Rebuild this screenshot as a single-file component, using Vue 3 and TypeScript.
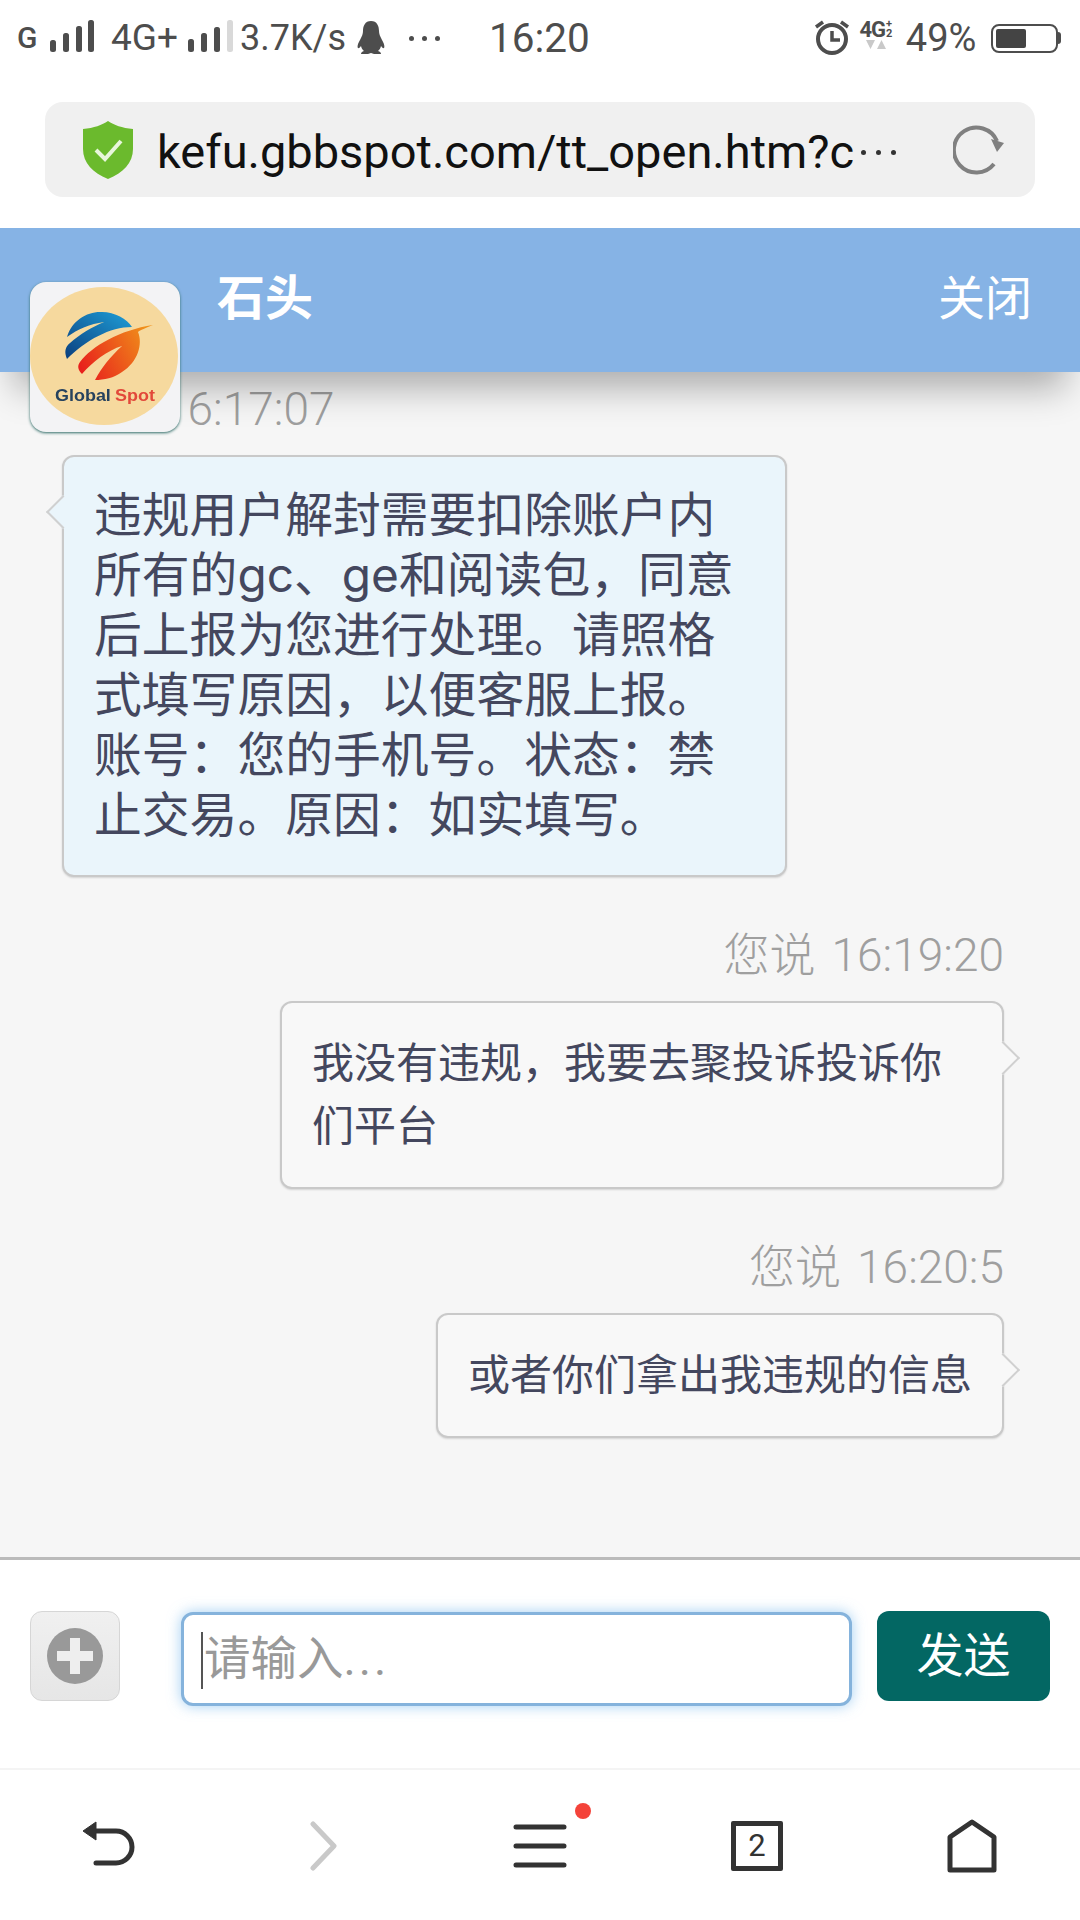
<template>
  <div class="page">
    <!-- 状态栏 -->
    <div class="status">
      <span class="st g">G</span>
      <svg class="bars b1" width="46" height="36" viewBox="0 0 46 36">
        <rect v-for="b in bars1" :key="b.x" :x="b.x" :y="b.y" width="6" :height="33 - b.y" rx="2.5" fill="#4d4d4d" />
      </svg>
      <span class="st net">4G+</span>
      <svg class="bars b2" width="48" height="36" viewBox="0 0 48 36">
        <rect v-for="b in bars2" :key="b.x" :x="b.x" :y="b.y" width="6" :height="33 - b.y" rx="2.5" :fill="b.c" />
      </svg>
      <span class="st speed">3.7K/s</span>
      <svg class="qq" width="28" height="36" viewBox="0 0 28 36">
        <path d="M14 1C8 1 6 6 6 11c0 3-1 5-3 9-2 3-3 7-2 8 1 .6 2-.6 3-2 .4 2 1 3 3 5-2 .6-3 1.500-3 3h7l3-1 3 1h7c0-1.500-1-2.400-3-3 2-2 2.600-3 3-5 1 1.400 2 2.600 3 2 1-1 0-5-2-8-2-4-3-6-3-9 0-5-2-10-8-10z" fill="#4d4d4d" />
      </svg>
      <span class="dots"><i></i><i></i><i></i></span>
      <span class="clock">16:20</span>
      <svg class="alarm" width="38" height="38" viewBox="0 0 38 38">
        <circle cx="19" cy="21" r="14" fill="none" stroke="#4d4d4d" stroke-width="4" />
        <path d="M19 13v9h8" fill="none" stroke="#4d4d4d" stroke-width="3.500" />
        <path d="M3 9l7-5M35 9l-7-5" fill="none" stroke="#4d4d4d" stroke-width="3.500" />
      </svg>
      <div class="sim">
        <div class="sim-top"><span class="sim-4g">4G</span><span class="sim-plus"><b>+</b><b>2</b></span></div>
        <svg width="24" height="10" viewBox="0 0 24 10">
          <path d="M2 0h9l-4.500 9zM22 9h-9l4.500-9z" fill="#c9c9c9" />
        </svg>
      </div>
      <span class="st pct">49%</span>
      <div class="battery"><div class="battery-fill"></div></div>
      <div class="battery-nub"></div>
    </div>

    <!-- 地址栏 -->
    <div class="addr-wrap">
      <div class="addr">
        <svg class="shield" width="50" height="58" viewBox="0 0 50 58">
          <path d="M25 0c6 4 14 7 25 8v20c0 14-10 24-25 30C10 52 0 42 0 28V8C11 7 19 4 25 0z" fill="#6bba2d" />
          <path d="M13 29l9 9 16-18" fill="none" stroke="#e8f6dc" stroke-width="4" />
        </svg>
        <span class="url">kefu.gbbspot.com/tt_open.htm?c</span>
        <span class="url-more"><i></i><i></i><i></i></span>
        <svg class="reload" width="54" height="52" viewBox="0 0 54 52">
          <path d="M44 17A22.500 22.500 0 1 0 41 40" fill="none" stroke="#808080" stroke-width="4" />
          <path d="M38 15l13 4-7 9z" fill="#808080" />
        </svg>
      </div>
    </div>

    <!-- 聊天头部 -->
    <div class="chat-head">
      <span class="name">石头</span>
      <span class="close">关闭</span>
      <div class="avatar">
        <svg width="150" height="150" viewBox="0 0 150 150">
          <defs>
            <linearGradient id="blue" x1="0" y1="1" x2="1" y2="0">
              <stop offset="0" stop-color="#0b3f7e" />
              <stop offset="1" stop-color="#1f9fd8" />
            </linearGradient>
            <linearGradient id="orange" x1="0" y1="0.7" x2="1" y2="0.3">
              <stop offset="0" stop-color="#e8201c" />
              <stop offset="1" stop-color="#f0901a" />
            </linearGradient>
          </defs>
          <ellipse cx="74" cy="74" rx="74" ry="69" fill="#f6d99e" />
          <path d="M37 55C42 38 58 29 72 30c13 0 25 7 30 15C80 45 56 58 37 77c-3-7-2-12 3-16 10-9 22-16 34-21-14 2-26 7-37 15z" fill="url(#blue)" />
          <path d="M123 43c-7 3-13 5-15 7 5 12 0 30-16 40-8 6-18 8-27 8 7-13 15-23 27-34-14 4-30 16-40 28-4-4-5-8-2-12C62 64 90 48 123 43z" fill="url(#orange)" />
          <text x="25" y="119" class="logo-text" textLength="100" lengthAdjust="spacingAndGlyphs"><tspan fill="#26425e">Global</tspan><tspan fill="#e2483a" dx="4">Spot</tspan></text>
        </svg>
      </div>
    </div>

    <!-- 消息列表 -->
    <div class="chat">
      <div v-for="m in messages" :key="m.time" class="msg" :class="m.side">
        <div class="time">{{ m.time }}</div>
        <div class="bubble">{{ m.text }}</div>
      </div>
    </div>

    <!-- 输入区 -->
    <div class="composer">
      <div class="plus">
        <svg width="56" height="56" viewBox="0 0 56 56">
          <circle cx="28" cy="28" r="28" fill="#999" />
          <path d="M23 10h10v13h13v10H33v13H23V33H10V23h13z" fill="#eee" />
        </svg>
      </div>
      <div class="input">
        <span class="caret"></span>
        <span class="placeholder">请输入<span class="ellipsis">...</span></span>
      </div>
      <div class="send">发送</div>
    </div>

    <!-- 浏览器底栏 -->
    <div class="nav">
      <div class="nav-item">
        <svg width="54" height="50" viewBox="0 0 54 50">
          <path d="M13 10h22a14 14 0 0 1 0 32H15" fill="none" stroke="#333" stroke-width="5" stroke-linecap="round" />
          <path d="M15 1v18L2 10z" fill="#333" stroke="#333" stroke-width="1" stroke-linejoin="round" />
        </svg>
      </div>
      <div class="nav-item">
        <svg width="30" height="50" viewBox="0 0 30 50">
          <path d="M4 3l21 22L4 47" fill="none" stroke="#c9c9c9" stroke-width="5" stroke-linecap="round" stroke-linejoin="round" />
        </svg>
      </div>
      <div class="nav-item">
        <svg width="54" height="46" viewBox="0 0 54 46">
          <path d="M3 4h48M3 23h48M3 42h48" fill="none" stroke="#333" stroke-width="5" stroke-linecap="round" />
        </svg>
        <span class="dot"></span>
      </div>
      <div class="nav-item">
        <div class="tabs">2</div>
      </div>
      <div class="nav-item">
        <svg width="50" height="54" viewBox="0 0 50 54">
          <path d="M25 3L3 18v33h44V18z" fill="none" stroke="#333" stroke-width="5" stroke-linejoin="round" />
        </svg>
      </div>
    </div>
  </div>
</template>

<script setup lang="ts">
interface Message {
  side: 'left' | 'right'
  time: string
  text: string
}

const bars1 = [
  { x: 0, y: 21 },
  { x: 13, y: 14 },
  { x: 26, y: 7 },
  { x: 38, y: 1 }
]

const bars2 = [
  { x: 0, y: 20, c: '#4d4d4d' },
  { x: 13, y: 14, c: '#4d4d4d' },
  { x: 26, y: 8, c: '#4d4d4d' },
  { x: 39, y: 1, c: '#d9d9d9' }
]

const messages: Message[] = [
  {
    side: 'left',
    time: '16:17:07',
    text: '违规用户解封需要扣除账户内所有的gc、ge和阅读包，同意后上报为您进行处理。请照格式填写原因，以便客服上报。账号：您的手机号。状态：禁止交易。原因：如实填写。'
  },
  { side: 'right', time: '您说 16:19:20', text: '我没有违规，我要去聚投诉投诉你们平台' },
  { side: 'right', time: '您说 16:20:5', text: '或者你们拿出我违规的信息' }
]
</script>

<style>
html,
body {
  margin: 0;
  background: #fff;
}
</style>

<style scoped>
.page {
  width: 1080px;
  height: 1920px;
  display: flex;
  flex-direction: column;
  overflow: hidden;
  background: #fff;
  font-family: Roboto, "Noto Sans CJK SC", sans-serif;
}

/* 状态栏 */
.status {
  height: 76px;
  flex: none;
  display: flex;
  align-items: center;
  padding-left: 17px;
  color: #4d4d4d;
}
.st {
  line-height: 40px;
}
.g { width: 28px; font-size: 30px; font-weight: 500; }
.bars { margin-top: -2px; }
.b1 { margin-left: 5px; }
.net { margin-left: 15px; font-size: 37px; }
.b2 { margin-left: 10px; }
.speed { margin-left: 4px; font-size: 36px; }
.qq { margin-left: 11px; }
.dots {
  display: flex;
  gap: 8px;
  margin-left: 24px;
}
.dots i {
  width: 5px;
  height: 5px;
  border-radius: 50%;
  background: #4d4d4d;
}
.clock {
  margin-left: 49px;
  font-size: 40.500px;
}
.alarm { margin-left: 223px; margin-top: -2px; }
.sim {
  width: 38px;
  margin-left: 6px;
  margin-top: -8px;
  display: flex;
  flex-direction: column;
  align-items: center;
}
.sim-top {
  display: flex;
  align-items: center;
  height: 22px;
}
.sim-4g {
  font-size: 22px;
  font-weight: 700;
  letter-spacing: -1px;
}
.sim-plus {
  display: flex;
  flex-direction: column;
  font-size: 11px;
  line-height: 10px;
  margin-left: 1px;
}
.sim-plus b { font-weight: 700; }
.pct { margin-left: 11px; font-size: 38px; }
.battery {
  width: 67px;
  height: 29px;
  box-sizing: border-box;
  margin-left: 15px;
  border: 2.500px solid #4d4d4d;
  border-radius: 8px;
  padding: 3px;
}
.battery-fill {
  width: 30px;
  height: 100%;
  background: #444;
  border-radius: 2px;
}
.battery-nub {
  width: 3px;
  height: 12px;
  background: #4d4d4d;
  border-radius: 0 3px 3px 0;
}

/* 地址栏 */
.addr-wrap {
  height: 152px;
  flex: none;
  box-sizing: border-box;
  padding: 26px 45px 0;
}
.addr {
  height: 95px;
  border-radius: 18px;
  background: #f0f0f0;
  display: flex;
  align-items: center;
  padding: 0 28px 0 38px;
}
.url {
  margin-left: 24px;
  margin-top: 4px;
  font-size: 47px;
  color: #111;
  white-space: nowrap;
}
.url-more {
  display: flex;
  gap: 10px;
  margin-left: 7px;
  margin-top: 6px;
}
.url-more i {
  width: 5px;
  height: 5px;
  border-radius: 50%;
  background: #333;
}
.reload { margin-left: auto; }

/* 聊天头部 */
.chat-head {
  height: 144px;
  flex: none;
  position: relative;
  z-index: 2;
  display: flex;
  align-items: center;
  justify-content: space-between;
  padding: 0 48px 0 217px;
  background: #86b3e5;
  color: #fff;
  box-shadow: 0 30px 34px -14px rgba(0, 0, 0, 0.3);
}
.name {
  font-size: 48px;
  font-weight: 700;
  margin-top: -12px;
}
.close {
  font-size: 47px;
  margin-top: -12px;
}
.avatar {
  position: absolute;
  left: 30px;
  top: 54px;
  width: 150px;
  height: 150px;
  border-radius: 16px;
  overflow: hidden;
  background: #f3f3f5;
  box-shadow: 0 1px 3px #2f6b66;
}
.avatar svg {
  display: block;
  filter: blur(0.5px);
}
.logo-text {
  font-family: "Liberation Sans", sans-serif;
  font-size: 17px;
  font-weight: 700;
}

/* 消息 */
.chat {
  flex: 1;
  min-height: 0;
  background: #f6f6f6;
  padding: 11px 76px 0 62px;
}
.msg {
  display: flex;
  flex-direction: column;
  margin-bottom: 52px;
}
.time {
  height: 50px;
  line-height: 52px;
  font-size: 46px;
  font-weight: 300;
  word-spacing: 5px;
  color: #9f9f9f;
  margin-bottom: 22px;
}
.bubble {
  position: relative;
  box-sizing: border-box;
  padding: 28px 30px 30px;
  border: 2px solid #c9c9c9;
  border-radius: 12px;
  font-family: Inter, "Noto Sans CJK SC", sans-serif;
  font-size: 42px;
  line-height: 63px;
  color: #44475e;
  background: #f8f8f8;
  box-shadow: 0 1px 2px rgba(0, 0, 0, 0.14);
}
.bubble::before {
  content: "";
  position: absolute;
  top: 43px;
  width: 22px;
  height: 22px;
  background: inherit;
  border: 2px solid #d0d0d0;
  transform: rotate(45deg);
}
.msg.left {
  align-items: flex-start;
}
.msg.left .time {
  margin-left: 100px;
}
.msg.left .bubble {
  width: 725px;
  background: #eaf5fb;
  font-size: 47.800px;
  line-height: 60px;
}
.msg.left .bubble::before {
  left: -13px;
  border-width: 0 0 2px 2px;
}
.msg.right {
  align-items: flex-end;
}
.msg.right .bubble {
  max-width: 724px;
}
.msg.right .bubble::before {
  right: -13px;
  border-width: 2px 2px 0 0;
}

/* 输入区 */
.composer {
  height: 213px;
  flex: none;
  box-sizing: border-box;
  display: flex;
  align-items: flex-start;
  padding: 51px 30px 0;
  border-top: 3px solid #bbb;
  border-bottom: 2px solid #f4f4f4;
}
.plus {
  width: 90px;
  height: 90px;
  box-sizing: border-box;
  display: flex;
  align-items: center;
  justify-content: center;
  border: 1px solid #d6d6d6;
  border-radius: 12px;
  background: linear-gradient(#f0f0f0, #e6e6e6);
}
.input {
  position: relative;
  width: 671px;
  height: 94px;
  box-sizing: border-box;
  margin: 1px 0 0 61px;
  display: flex;
  align-items: center;
  padding: 0 0 9px 20px;
  border: 3px solid #85b3dc;
  border-radius: 12px;
  background: #fff;
  box-shadow: 0 0 14px rgba(102, 175, 233, 0.6);
}
.placeholder {
  font-size: 46.500px;
  color: #999;
}
.ellipsis {
  letter-spacing: 3px;
}
.caret {
  position: absolute;
  left: 17px;
  top: 17px;
  width: 2px;
  height: 57px;
  background: #555;
}
.send {
  width: 173px;
  height: 90px;
  margin-left: 25px;
  border-radius: 12px;
  background: #036763;
  color: #fff;
  font-size: 47px;
  line-height: 90px;
  text-align: center;
}

/* 底栏 */
.nav {
  flex: none;
  height: 150px;
  box-sizing: border-box;
  padding-top: 2px;
  display: grid;
  grid-template-columns: repeat(5, 1fr);
}
.nav-item {
  position: relative;
  display: flex;
  align-items: center;
  justify-content: center;
}
.dot {
  position: absolute;
  left: 143px;
  top: 31px;
  width: 16px;
  height: 16px;
  border-radius: 50%;
  background: #f4433a;
}
.tabs {
  width: 52px;
  height: 50px;
  box-sizing: border-box;
  margin-left: 2px;
  border: 5px solid #333;
  border-radius: 2px;
  color: #333;
  font-size: 31px;
  line-height: 40px;
  text-align: center;
}
</style>
